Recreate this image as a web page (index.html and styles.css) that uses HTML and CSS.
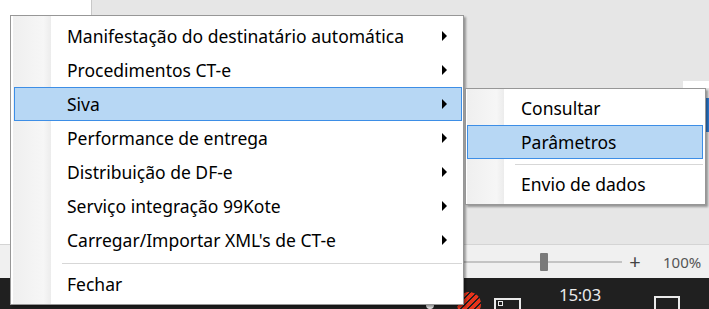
FILE: index.html
```html
<!DOCTYPE html>
<html lang="pt-BR">
<head>
<meta charset="utf-8">
<title>Menu</title>
<link rel="stylesheet" href="styles.css">
</head>
<body>
<div class="desktop">
  <div class="app">
    <div class="app-left"></div>
    <div class="app-main">
      <div class="app-top-strip"><span class="white-tab"></span></div>
      <div class="app-blue-edge"></div>
    </div>
  </div>
  <div class="statusbar">
    <div class="slider"><span class="thumb"></span></div>
    <span class="plus">+</span>
    <span class="zoom">100%</span>
  </div>
  <div class="taskbar">
    <span class="tray-small"></span>
    <span class="tray-red"></span>
    <span class="tray-kbd"><span class="kbd-dot"></span></span>
    <span class="clock">15:03</span>
    <span class="tray-notif"></span>
  </div>

  <div class="menu menu-main">
    <div class="item"><span class="label">Manifestação do destinatário automática</span><span class="arrow"></span></div>
    <div class="item"><span class="label">Procedimentos CT-e</span><span class="arrow"></span></div>
    <div class="item active"><span class="label">Siva</span><span class="arrow"></span></div>
    <div class="item"><span class="label">Performance de entrega</span><span class="arrow"></span></div>
    <div class="item"><span class="label">Distribuição de DF-e</span><span class="arrow"></span></div>
    <div class="item"><span class="label">Serviço integração 99Kote</span><span class="arrow"></span></div>
    <div class="item"><span class="label">Carregar/Importar XML's de CT-e</span><span class="arrow"></span></div>
    <div class="sep"></div>
    <div class="item"><span class="label">Fechar</span></div>
  </div>

  <div class="menu menu-sub">
    <div class="item"><span class="label">Consultar</span></div>
    <div class="item active"><span class="label">Parâmetros</span></div>
    <div class="sep"></div>
    <div class="item"><span class="label">Envio de dados</span></div>
  </div>
</div>
</body>
</html>
```
FILE: styles.css
```css
html, body {
  margin: 0;
  padding: 0;
}
body {
  width: 709px;
  height: 309px;
  overflow: hidden;
  font-family: "Noto Sans", "Open Sans", sans-serif;
}
.desktop {
  position: relative;
  width: 709px;
  height: 309px;
  display: flex;
  flex-direction: column;
}
.app {
  height: 244px;
  display: flex;
  border-bottom: 1px solid #d4d4d4;
}
.app-left {
  width: 91px;
  background: #ffffff;
}
.app-main {
  flex: 1;
  background: #e6e6e6;
  border-left: 1px solid #c8c8c8;
  display: flex;
  flex-direction: column;
  align-items: flex-end;
}
.app-top-strip {
  height: 88px;
  width: 100%;
  display: flex;
  justify-content: flex-end;
  align-items: flex-end;
}
.white-tab {
  width: 26px;
  height: 7px;
  background: #ffffff;
}
.app-blue-edge {
  width: 4px;
  height: 34px;
  margin-top: 10px;
  background: #2f7fd8;
}
.statusbar {
  height: 33px;
  background: #f0f0f0;
  display: flex;
  align-items: center;
  padding-left: 440px;
  color: #555;
}
.slider {
  width: 182px;
  height: 2px;
  background: #c4c4c4;
  display: flex;
  align-items: center;
  padding-left: 100px;
  box-sizing: border-box;
}
.thumb {
  width: 8px;
  height: 18px;
  background: #7a7a7a;
  border-radius: 1px;
  flex: none;
}
.plus {
  margin-left: 6px;
  font-size: 20px;
  line-height: 1;
  width: 14px;
  text-align: center;
  color: #444;
}
.zoom {
  margin-left: 21px;
  font-size: 15px;
  color: #555;
}
.taskbar {
  flex: 1;
  background: #202020;
  display: flex;
  align-items: flex-end;
}
.tray-small {
  width: 8px;
  height: 8px;
  border-radius: 50%;
  background: #e8e8e8;
  margin-left: 426px;
}
.tray-red {
  width: 24px;
  height: 24px;
  border-radius: 50%;
  margin-left: 23px;
  margin-bottom: -7px;
  background: repeating-linear-gradient(135deg, #e8341c 0 4px, #202020 4px 5px);
}
.tray-kbd {
  width: 23px;
  height: 9px;
  border: 2px solid #eaeaea;
  border-bottom: none;
  margin-left: 13px;
  position: relative;
}
.kbd-dot {
  position: absolute;
  left: 2px;
  top: 1px;
  width: 3px;
  height: 3px;
  border: 1px solid #eaeaea;
}
.clock {
  color: #eaeaea;
  font-size: 17px;
  font-family: "Noto Sans", sans-serif;
  margin-left: 38px;
  align-self: flex-start;
  margin-top: 5px;
  letter-spacing: -0.3px;
}
.tray-notif {
  width: 22px;
  height: 11px;
  border: 2px solid #eaeaea;
  border-bottom: none;
  margin-left: 53px;
}

/* menus */
.menu {
  position: absolute;
  box-sizing: border-box;
  background-color: #ffffff;
  border: 1px solid #979797;
  box-shadow: 2px 2px 2px rgba(0, 0, 0, 0.35);
  display: flex;
  flex-direction: column;
  background-repeat: no-repeat;
}
.menu-main {
  left: 10px;
  top: 15px;
  width: 454px;
  height: 290px;
  padding: 3px 1px 3px 3px;
  background-image: linear-gradient(to right, #efefef, #f6f6f6 80%, #ececec);
  background-size: 38px 100%;
  background-position: 2px 0;
}
.menu-sub {
  left: 465px;
  top: 88px;
  width: 241px;
  height: 117px;
  padding: 2px 2px 3px 1px;
  background-image: linear-gradient(to right, #efefef, #f6f6f6 80%, #ececec);
  background-size: 37px 100%;
  background-position: 1px 0;
}
.item {
  height: 34px;
  box-sizing: border-box;
  border: 1px solid transparent;
  display: flex;
  align-items: center;
  padding-left: 52px;
  padding-right: 14px;
  font-size: 17.5px;
  color: #000;
  white-space: nowrap;
}
.menu-sub .item {
  padding-left: 53px;
}
.item.active {
  background: #b7d7f4;
  border-color: #3d8ee6;
}
.label {
  flex: 1;
}
.arrow {
  width: 0;
  height: 0;
  border-left: 5px solid #000;
  border-top: 5px solid transparent;
  border-bottom: 5px solid transparent;
}
.sep {
  height: 10px;
  box-sizing: border-box;
  margin-left: 48px;
  padding-top: 6px;
}
.sep::after {
  content: "";
  display: block;
  height: 1px;
  background: #d7d7d7;
}
.menu-sub .sep {
  height: 8px;
  padding-top: 5px;
  margin-left: 48px;
}
```
